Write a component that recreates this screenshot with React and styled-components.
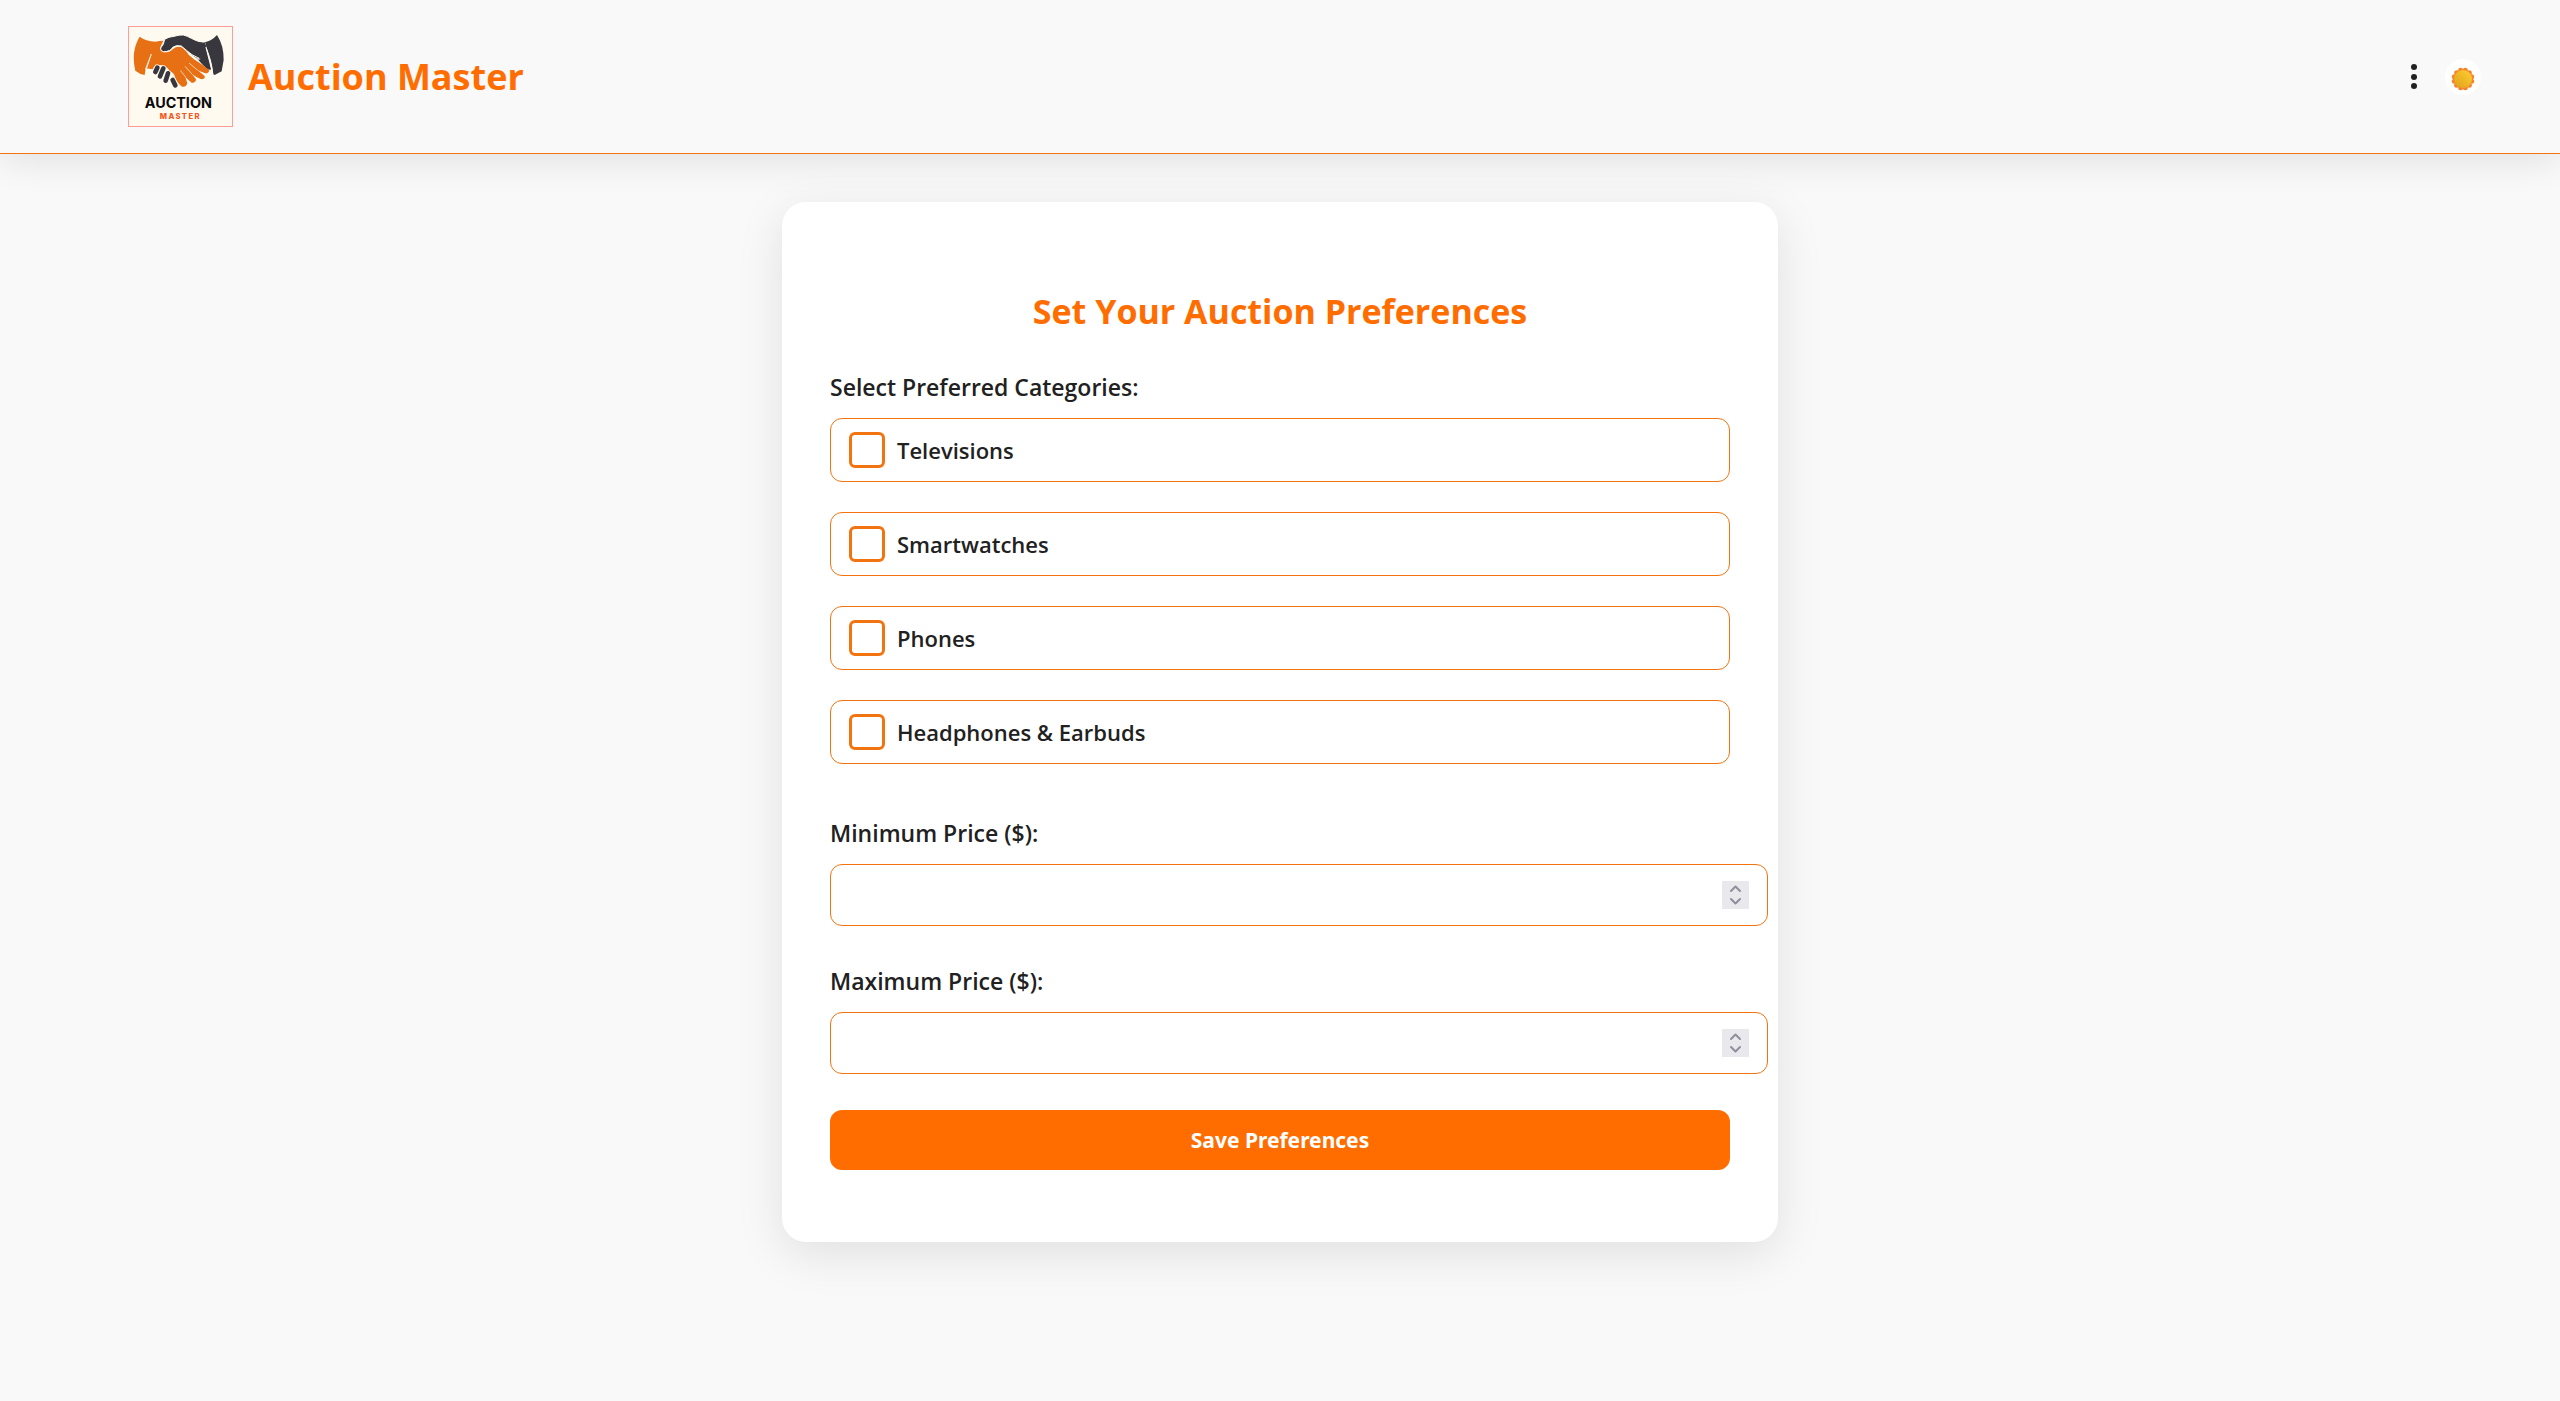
import React, { useState } from "react";
import styled, { createGlobalStyle } from "styled-components";

const categories = [
  { id: "televisions", name: "Televisions" },
  { id: "smartwatches", name: "Smartwatches" },
  { id: "phones", name: "Phones" },
  { id: "headphones", name: "Headphones & Earbuds" },
];

function Logo() {
  return (
    <LogoSvg viewBox="54 48 315 303" role="img" aria-label="Auction Master logo">
      <rect x="55.5" y="49.5" width="312" height="300" fill="#fffaf0" stroke="#ff9d94" strokeWidth="3" />
      {/* dark sleeve and thumb */}
      <path
        d="M321 75 Q342 108 341 150 L335 184 L314 195 L310 193 Q306 150 290 118 L302 180 L294 178 Q280 168 262 146 L240 130 L212 106 L284 97 Q306 92 321 75 Z"
        fill="#38373d"
      />
      {/* orange hand */}
      <path
        d="M89 80 Q108 94 136 95 Q150 92 160 92 Q154 104 151 112 Q150 124 160 127 Q180 128 190 116 Q200 108 212 111 Q224 116 236 134 Q250 148 268 158 L298 180 Q296 191 286 190 Q274 186 262 180 L284 198 Q286 208 274 208 Q258 202 246 192 L258 208 Q258 218 246 219 Q236 212 226 200 L232 220 Q228 233 216 230 Q204 222 196 204 Q192 186 178 184 Q174 168 162 174 Q156 160 146 168 Q134 162 128 178 L107 175 L104 195 Q88 192 76 182 Q62 124 89 80 Z"
        fill="#e87014"
      />
      {/* dark hand reaching over */}
      <path
        d="M284 97 L290 118 L284 146 Q262 146 246 134 Q230 122 214 108 Q198 104 188 112 Q182 125 160 125 Q150 123 152 114 Q162 104 164 88 Q176 80 192 79 Q208 74 220 75 Q232 78 244 85 Q262 96 284 97 Z"
        fill="#38373d"
        stroke="#fffaf0"
        strokeWidth="3"
      />
      <path d="M284 97 Q300 130 303 178 L294 176 Q282 168 268 148 L262 130 L270 104 Z" fill="#38373d" />
      <path d="M288 112 Q300 140 308 190 Q300 160 288 112 Z" fill="#fffaf0" stroke="#fffaf0" strokeWidth="3" />
      <path d="M258 142 L272 147 L266 149 Z" fill="#fffaf0" />
      <path d="M124 132 L109 178 L107 176 Z" fill="#fffaf0" stroke="#fffaf0" strokeWidth="2" />
      <g stroke="#fffaf0" strokeWidth="2" strokeLinecap="round">
        <path d="M262 180 L238 160" />
        <path d="M246 192 L226 170" />
        <path d="M226 200 L212 182" />
      </g>
      <g stroke="#fffaf0" strokeWidth="19" strokeLinecap="round">
        <path d="M142 173 L136 186" />
        <path d="M160 175 L150 199" />
        <path d="M174 190 L167 212" />
        <path d="M188 210 L196 226" />
      </g>
      <g stroke="#38373d" strokeWidth="14" strokeLinecap="round">
        <path d="M142 173 L136 186" />
        <path d="M160 175 L150 199" />
        <path d="M174 190 L167 212" />
        <path d="M188 210 L196 226" />
      </g>
      <LogoName x="205" y="294">AUCTION</LogoName>
      <LogoSub x="211" y="327">MASTER</LogoSub>
    </LogoSvg>
  );
}

function SunIcon() {
  const petals = Array.from({ length: 12 }, (_, i) => (i * Math.PI) / 6 + Math.PI / 12);

  return (
    <svg viewBox="0 0 24 24" width="24" height="24">
      <defs>
        <linearGradient id="sun" x1="1" y1="0" x2="0" y2="1">
          <stop offset="0" stopColor="#ffcf30" />
          <stop offset="1" stopColor="#dfa01c" />
        </linearGradient>
      </defs>
      {petals.map((a) => (
        <circle key={a} cx={12 + 9 * Math.cos(a)} cy={12 + 9 * Math.sin(a)} r="2.5" fill="#f5852a" />
      ))}
      <circle cx="12" cy="12" r="9" fill="url(#sun)" />
    </svg>
  );
}

function PriceField({ id, label, value, onChange }) {
  const step = (amount) => onChange(String(Math.max(0, Number(value) + amount)));

  return (
    <Field>
      <Label htmlFor={id}>{label}</Label>
      <InputWrap>
        <Input
          id={id}
          type="number"
          value={value}
          onChange={(e) => onChange(e.target.value)}
        />
        <Stepper>
          <StepButton type="button" aria-label="Increase" onClick={() => step(1)}>
            <svg viewBox="0 0 27 14">
              <path d="M9 10 L13.5 5.5 L18 10" />
            </svg>
          </StepButton>
          <StepButton type="button" aria-label="Decrease" onClick={() => step(-1)}>
            <svg viewBox="0 0 27 14">
              <path d="M9 4 L13.5 8.5 L18 4" />
            </svg>
          </StepButton>
        </Stepper>
      </InputWrap>
    </Field>
  );
}

function App() {
  const [selected, setSelected] = useState([]);
  const [minPrice, setMinPrice] = useState("");
  const [maxPrice, setMaxPrice] = useState("");

  const toggle = (id) => {
    setSelected((prev) =>
      prev.includes(id) ? prev.filter((item) => item !== id) : [...prev, id]
    );
  };

  return (
    <>
      <GlobalStyle />
      <Header>
        <Brand href="#">
          <Logo />
          <span>Auction Master</span>
        </Brand>
        <Actions>
          <MenuButton type="button" aria-label="Menu">
            <svg viewBox="0 0 8 28" width="8" height="28">
              <circle cx="4" cy="4" r="3" />
              <circle cx="4" cy="14" r="3" />
              <circle cx="4" cy="23" r="3" />
            </svg>
          </MenuButton>
          <ThemeButton type="button" aria-label="Toggle theme">
            <SunIcon />
          </ThemeButton>
        </Actions>
      </Header>
      <Main>
        <Card onSubmit={(e) => e.preventDefault()}>
          <Title>Set Your Auction Preferences</Title>
          <Categories>
            <Legend>Select Preferred Categories:</Legend>
            <Options>
              {categories.map((category) => (
                <Option key={category.id} htmlFor={category.id}>
                  <Checkbox
                    id={category.id}
                    type="checkbox"
                    checked={selected.includes(category.id)}
                    onChange={() => toggle(category.id)}
                  />
                  {category.name}
                </Option>
              ))}
            </Options>
          </Categories>
          <PriceField
            id="minPrice"
            label="Minimum Price ($):"
            value={minPrice}
            onChange={setMinPrice}
          />
          <PriceField
            id="maxPrice"
            label="Maximum Price ($):"
            value={maxPrice}
            onChange={setMaxPrice}
          />
          <SaveButton type="submit">Save Preferences</SaveButton>
        </Card>
      </Main>
    </>
  );
}

export default App;

const GlobalStyle = createGlobalStyle`
  body {
    margin: 0;
    min-height: 100vh;
    background-color: #f9f9f9;
    color: #212121;
    font-family: "Segoe UI", "Open Sans", "Noto Sans", sans-serif;
  }
`;

const Header = styled.header`
  display: flex;
  align-items: center;
  justify-content: space-between;
  padding: 26px 79px 26px 128px;
  border-bottom: 1px solid #f27410;
  box-shadow: 0 6px 36px rgba(0, 0, 0, 0.1);
`;

const Brand = styled.a`
  display: flex;
  align-items: center;
  gap: 15px;
  color: #ff6d00;
  font-size: 36px;
  font-weight: 700;
  text-decoration: none;
`;

const LogoSvg = styled.svg`
  display: block;
  width: 105px;
  height: 101px;
`;

const LogoName = styled.text`
  font-family: Inter, sans-serif;
  font-size: 43px;
  font-weight: 700;
  text-anchor: middle;
  fill: #0a0a0a;
`;

const LogoSub = styled.text`
  font-family: Inter, sans-serif;
  font-size: 23px;
  font-weight: 800;
  letter-spacing: 4px;
  text-anchor: middle;
  fill: #f2571d;
`;

const Actions = styled.div`
  display: flex;
  align-items: center;
  gap: 27px;
`;

const MenuButton = styled.button`
  display: flex;
  padding: 0;
  border: none;
  background: none;
  cursor: pointer;

  svg {
    fill: #212121;
  }
`;

const ThemeButton = styled.button`
  display: flex;
  align-items: center;
  justify-content: center;
  width: 36px;
  height: 36px;
  padding: 4px 0 0;
  border: none;
  border-radius: 50%;
  background-color: #fff;
  cursor: pointer;
`;

const Main = styled.main`
  display: flex;
  justify-content: center;
  padding: 48px 24px;
`;

const Card = styled.form`
  display: flex;
  flex-direction: column;
  box-sizing: border-box;
  width: 100%;
  max-width: 996px;
  padding: 84px 48px 72px;
  border-radius: 24px;
  background-color: #fff;
  box-shadow: 0 12px 48px rgba(0, 0, 0, 0.1);
`;

const Title = styled.h2`
  margin: 0 0 32px;
  color: #ff6d00;
  font-size: 34px;
  font-weight: 700;
  line-height: 50px;
  text-align: center;
`;

const Categories = styled.fieldset`
  min-width: 0;
  margin: 0 0 50px;
  padding: 0;
  border: none;
`;

const Legend = styled.legend`
  padding: 0;
  margin-bottom: 12px;
  font-size: 23px;
  font-weight: 600;
  line-height: 38px;
`;

const Options = styled.div`
  display: flex;
  flex-direction: column;
  gap: 30px;
`;

const Option = styled.label`
  display: flex;
  align-items: center;
  gap: 12px;
  box-sizing: border-box;
  height: 64px;
  padding: 0 18px;
  border: 1px solid #f27410;
  border-radius: 12px;
  font-size: 22px;
  font-weight: 600;
  cursor: pointer;
`;

const Checkbox = styled.input`
  appearance: none;
  box-sizing: border-box;
  width: 36px;
  height: 36px;
  margin: 0;
  border: 3px solid #f27410;
  border-radius: 6px;
  cursor: pointer;

  &:checked {
    background-color: #f27410;
    box-shadow: inset 0 0 0 4px #fff;
  }
`;

const Field = styled.div`
  display: flex;
  flex-direction: column;
  gap: 12px;
  margin-bottom: 36px;
`;

const Label = styled.label`
  font-size: 23px;
  font-weight: 600;
  line-height: 38px;
`;

const InputWrap = styled.div`
  position: relative;
  width: calc(100% + 38px);
`;

const Input = styled.input`
  display: block;
  box-sizing: border-box;
  width: 100%;
  height: 62px;
  padding: 0 48px 0 18px;
  border: 1px solid #f27410;
  border-radius: 12px;
  background-color: #fff;
  color: #212121;
  font-family: inherit;
  font-size: 21px;
  appearance: textfield;

  &::-webkit-inner-spin-button,
  &::-webkit-outer-spin-button {
    appearance: none;
    margin: 0;
  }
`;

const Stepper = styled.div`
  position: absolute;
  top: 17px;
  right: 19px;
  display: flex;
  flex-direction: column;
  background-color: #e9e9ed;
`;

const StepButton = styled.button`
  display: block;
  width: 27px;
  height: 14px;
  padding: 0;
  border: none;
  background: none;
  cursor: pointer;

  svg {
    display: block;
    fill: none;
    stroke: #8f8f9d;
    stroke-width: 2;
    stroke-linecap: round;
    stroke-linejoin: round;
  }
`;

const SaveButton = styled.button`
  height: 60px;
  border: none;
  border-radius: 12px;
  background-color: #ff6d00;
  color: #fff;
  font-family: Tahoma, "Noto Sans", sans-serif;
  font-size: 21px;
  font-weight: 700;
  cursor: pointer;
`;
